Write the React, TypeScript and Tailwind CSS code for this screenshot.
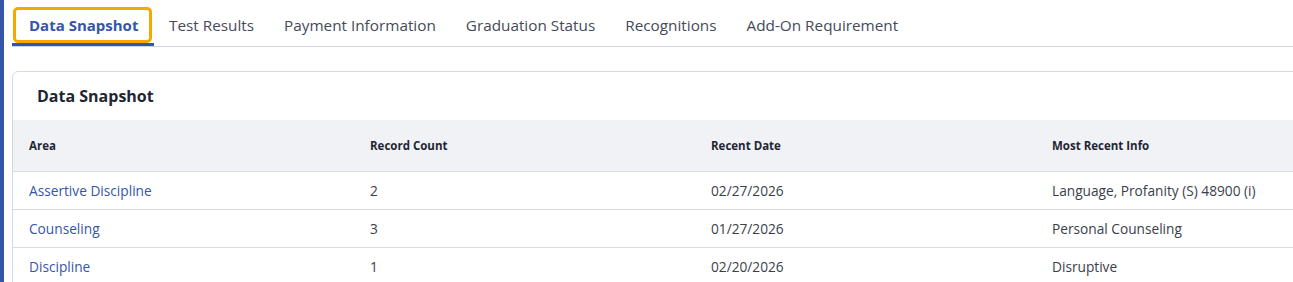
import React from 'react';

const tabs = ['Data Snapshot', 'Test Results', 'Payment Information', 'Graduation Status', 'Recognitions', 'Add-On Requirement'];

const rows = [
    { area: 'Assertive Discipline', count: '2', date: '02/27/2026', info: 'Language, Profanity (S) 48900 (i)' },
    { area: 'Counseling', count: '3', date: '01/27/2026', info: 'Personal Counseling' },
    { area: 'Discipline', count: '1', date: '02/20/2026', info: 'Disruptive' },
];

const App = () => {
    return (
        <section className="h-[282px] w-full flex overflow-hidden bg-white font-['Open_Sans',sans-serif]">
            <aside className="w-[4px] h-full bg-[#3556a8] shrink-0" />
            <main className="flex-1 min-w-0 pl-[8px] overflow-hidden">
                <nav className="h-[47px] border-b border-[#cfd4de] flex items-end">
                    {tabs.map((t, i) => (
                        <div key={t} className={i === 0 ? 'h-[41px] border-b-[3px] border-[#3556a8] flex items-start' : 'h-[41px] flex items-start'}>
                            {i === 0 ? (
                                <span className="mt-[2px] ml-[1px] mr-[2px] h-[36px] w-[139px] rounded-[5px] border-[3px] border-[#f5a800] flex items-center pl-[13px] text-[15px] font-bold text-[#3556a8]">
                                    {t}
                                </span>
                            ) : (
                                <span className="mt-[2px] h-[36px] px-[15px] flex items-center text-[15.3px] text-[#444b57]">
                                    {t}
                                </span>
                            )}
                        </div>
                    ))}
                </nav>
                <div className="mt-[24px] w-[1400px] border border-[#d5d9e0] rounded-tl-[6px] bg-white">
                    <h2 className="h-[48px] pl-[24px] flex items-center text-[16px] font-bold text-[#1f2633]">Data Snapshot</h2>
                    <div className="grid grid-cols-[341px_341px_341px_341px] h-[52px] items-center bg-[#f1f2f6] border-b border-[#d8dbe2] text-[11.5px] font-bold text-[#1f2633]">
                        <span className="pl-[16px] pt-[1px]">Area</span>
                        <span className="pl-[16px] pt-[1px]">Record Count</span>
                        <span className="pl-[16px] pt-[1px]">Recent Date</span>
                        <span className="pl-[16px] pt-[1px]">Most Recent Info</span>
                    </div>
                    {rows.map(r => (
                        <div key={r.area} className="grid grid-cols-[341px_341px_341px_341px] h-[38px] items-center border-b border-[#d8dbe2] text-[13.7px] text-[#3a404b]">
                            <span className="pl-[16px] pt-[1px] text-[#3556a8]">{r.area}</span>
                            <span className="pl-[16px] pt-[1px]">{r.count}</span>
                            <span className="pl-[16px] pt-[1px]">{r.date}</span>
                            <span className="pl-[16px] pt-[1px]">{r.info}</span>
                        </div>
                    ))}
                </div>
            </main>
        </section>
    );
};

export default App;
